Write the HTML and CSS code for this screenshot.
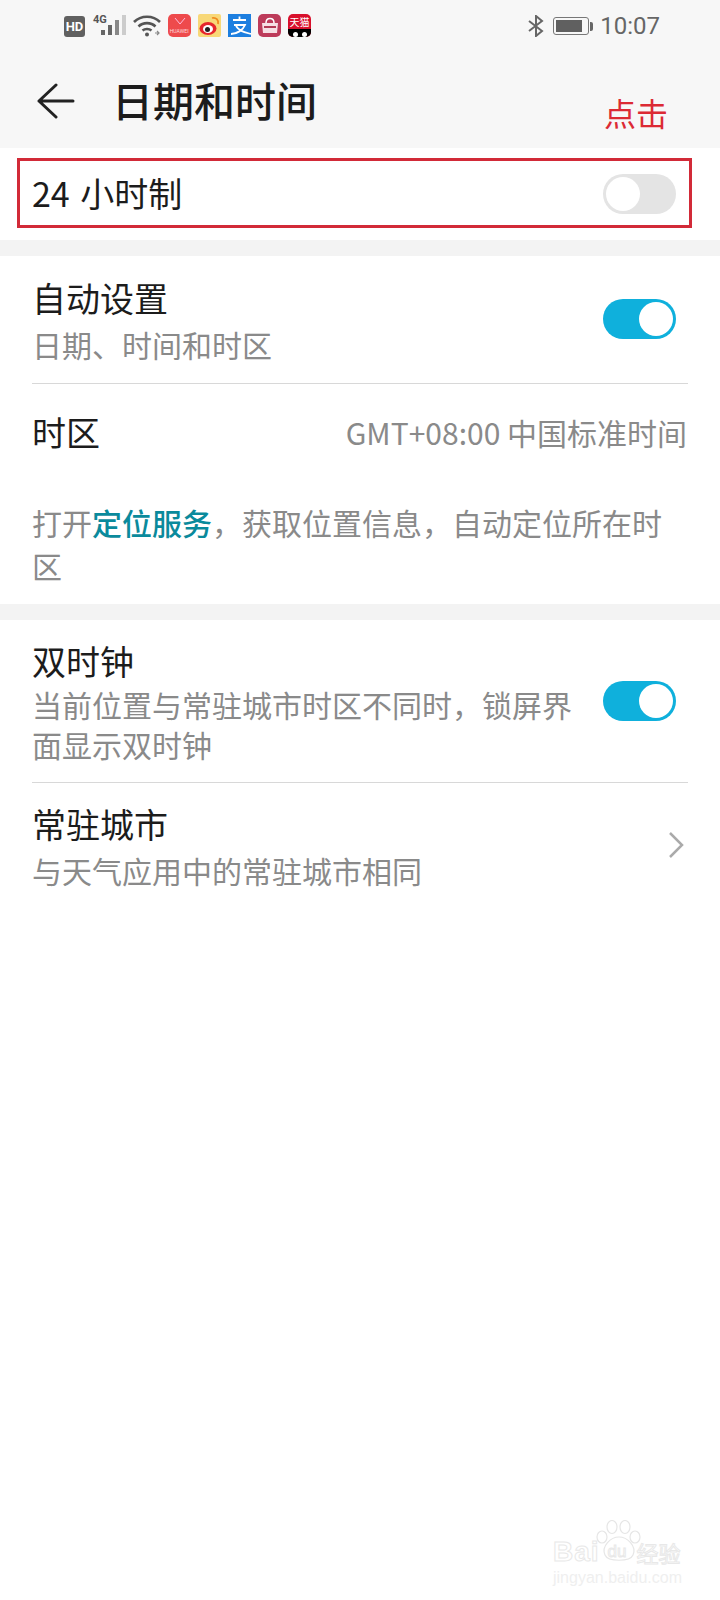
FILE: index.html
```html
<!DOCTYPE html>
<html lang="zh-CN">
<head>
    <meta charset="UTF-8">
    <meta name="viewport" content="width=device-width, initial-scale=1.0">
    <title>日期和时间</title>
    <link rel="stylesheet" href="styles.css">
</head>
<body>
    <div class="top-area">
        <div class="status-bar">
            <div class="status-left">
                <span class="hd-badge">HD</span>
                <div class="signal">
                    <span class="signal-label">4G</span>
                    <svg width="26" height="22" viewBox="0 0 26 22">
                        <rect x="0" y="16" width="4" height="5" fill="#666"/>
                        <rect x="7" y="11" width="4" height="10" fill="#666"/>
                        <rect x="14" y="6" width="4" height="15" fill="#888"/>
                        <rect x="21" y="1" width="4" height="20" fill="#ccc"/>
                    </svg>
                </div>
                <svg class="wifi" width="28" height="24" viewBox="0 0 28 24" fill="none" stroke="#555" stroke-width="2.6">
                    <path d="M1 8 C8 1 20 1 27 8"/>
                    <path d="M5.500 12.500 C10 8 18 8 22.500 12.500"/>
                    <path d="M9.500 16.500 C12 14.500 16 14.500 18.500 16.500"/>
                    <circle cx="14" cy="20.500" r="2" fill="#555" stroke="none"/>
                    <path d="M22 19 h4 M24 17 l2 2 l-2 2" stroke-width="1.200" stroke="#888"/>
                </svg>
                <div class="app-icon huawei">
                    <svg width="12" height="8" viewBox="0 0 12 8" fill="none" stroke="#fbd" stroke-width="1"><path d="M1 0 L6 6 L11 0"/></svg>
                    <span class="huawei-name">HUAWEI</span>
                </div>
                <div class="app-icon weibo">
                    <svg width="23" height="23" viewBox="0 0 23 23">
                        <ellipse cx="10" cy="14.500" rx="8.500" ry="6.500" fill="#e6262c"/>
                        <ellipse cx="10" cy="15" rx="5" ry="4" fill="#fff"/>
                        <circle cx="9.500" cy="15.500" r="2.500" fill="#222"/>
                        <path d="M14 4 C18 3 21 6 20 10" fill="none" stroke="#f08a1d" stroke-width="1.800"/>
                    </svg>
                </div>
                <div class="app-icon alipay">
                    <svg width="23" height="23" viewBox="0 0 23 23" fill="none" stroke="#fff" stroke-width="1.800">
                        <path d="M5 6 H18 M11.500 2.500 V6 M6 11 H17 C15 16 9 20 3 20 M8 12 C11 17 16 18 23 20"/>
                    </svg>
                </div>
                <div class="app-icon bag">
                    <svg width="22" height="22" viewBox="0 0 22 22">
                        <path d="M7 8 C7 2 15 2 15 8" fill="none" stroke="#fff" stroke-width="1.500"/>
                        <path d="M3 8 H19 L18 18 H4 Z" fill="#f6dfe4"/>
                        <rect x="5" y="11" width="12" height="2" fill="#b23a55"/>
                    </svg>
                </div>
                <div class="app-icon tmall">
                    <span class="tmall-name">天猫</span>
                    <div class="tmall-eyes"><i></i><i></i></div>
                </div>
            </div>
            <div class="status-right">
                <svg width="16" height="22" viewBox="0 0 16 22" fill="none" stroke="#666" stroke-width="2">
                    <path d="M1 6 L14 16 L8 21 V1 L14 6 L1 16"/>
                </svg>
                <div class="battery">
                    <div class="battery-body"><div class="battery-level"></div></div>
                    <div class="battery-cap"></div>
                </div>
                <span class="clock">10:07</span>
            </div>
        </div>
        <div class="app-bar">
            <svg class="back-arrow" width="38" height="36" viewBox="0 0 38 36" fill="none" stroke="#222" stroke-width="3" stroke-linecap="round" stroke-linejoin="round">
                <path d="M19 2 L2 18 L19 34 M2 18 H36"/>
            </svg>
            <h1 class="page-title">日期和时间</h1>
            <span class="click-note">点击</span>
        </div>
    </div>

    <div class="section section-first">
        <div class="row-boxed">
            <span class="row-title">24 小时制</span>
            <div class="toggle"><div class="knob"></div></div>
        </div>
    </div>
    <div class="band"></div>

    <div class="section">
        <div class="row row-auto">
            <div class="row-text">
                <div class="row-title">自动设置</div>
                <div class="row-sub">日期、时间和时区</div>
            </div>
            <div class="toggle on"><div class="knob"></div></div>
        </div>
        <div class="row row-zone">
            <div class="row-title">时区</div>
            <div class="row-value">GMT+08:00 中国标准时间</div>
        </div>
        <p class="note">打开<span class="note-link">定位服务</span>，获取位置信息，自动定位所在时区</p>
    </div>
    <div class="band"></div>

    <div class="section">
        <div class="row row-dual">
            <div class="row-text">
                <div class="row-title">双时钟</div>
                <div class="row-sub dual-sub">当前位置与常驻城市时区不同时，锁屏界面显示双时钟</div>
            </div>
            <div class="toggle on"><div class="knob"></div></div>
        </div>
        <div class="row row-city">
            <div class="row-text">
                <div class="row-title">常驻城市</div>
                <div class="row-sub">与天气应用中的常驻城市相同</div>
            </div>
            <svg class="chevron" width="16" height="28" viewBox="0 0 16 28" fill="none" stroke="#aaa" stroke-width="2.500">
                <path d="M2 2 L14 14 L2 26"/>
            </svg>
        </div>
    </div>

    <div class="watermark">
        <svg class="paw" width="50" height="44" viewBox="0 0 50 44" fill="#fff" stroke="#e6e6e6" stroke-width="1.200">
            <ellipse cx="7" cy="17" rx="5" ry="6"/>
            <ellipse cx="17" cy="7" rx="5" ry="6.500"/>
            <ellipse cx="30" cy="7" rx="5" ry="6.500"/>
            <ellipse cx="40" cy="17" rx="5" ry="6"/>
            <path d="M24 17 C32 17 42 26 38 35 C35 42 13 42 10 35 C6 26 16 17 24 17 Z"/>
        </svg>
        <div class="wm-line">
            <span class="wm-brand">Bai</span><span class="wm-du">du</span><span class="wm-cn">经验</span>
        </div>
        <div class="wm-url">jingyan.baidu.com</div>
    </div>
</body>
</html>
```

FILE: styles.css
```css
* {
    box-sizing: border-box;
}
body {
    margin: 0;
    width: 720px;
    height: 1600px;
    overflow: hidden;
    position: relative;
    background: #fff;
    color: #1c1c1c;
    font-family: "Noto Sans CJK SC", "Roboto", sans-serif;
}
.top-area {
    background: #f7f7f7;
    height: 148px;
}
.status-bar {
    height: 52px;
    padding: 14px 60px 0 64px;
    display: flex;
    justify-content: space-between;
    align-items: flex-start;
}
.status-left {
    display: flex;
    align-items: flex-start;
}
.status-right {
    display: flex;
    align-items: center;
    height: 24px;
}
.hd-badge {
    width: 21px;
    height: 21px;
    margin-top: 2px;
    border-radius: 3px;
    background: #606060;
    color: #fff;
    font-family: "Roboto", sans-serif;
    font-size: 13px;
    font-weight: 700;
    line-height: 21px;
    text-align: center;
}
.signal {
    position: relative;
    width: 38px;
    height: 23px;
    margin-left: 8px;
    display: flex;
    justify-content: flex-end;
    padding-right: 4px;
}
.signal-label {
    position: absolute;
    left: 0;
    top: 0;
    color: #555;
    font-family: "Roboto", sans-serif;
    font-size: 11px;
    font-weight: 700;
    line-height: 12px;
}
.wifi {
    margin-left: 2px;
}
.app-icon {
    width: 23px;
    height: 23px;
    margin-left: 7px;
    border-radius: 5px;
    overflow: hidden;
    display: flex;
    flex-direction: column;
    align-items: center;
}
.huawei {
    background: #ee4a4c;
    justify-content: center;
    gap: 1px;
}
.huawei-name {
    color: #fdd;
    font-family: "Roboto", sans-serif;
    font-size: 6px;
    line-height: 7px;
    transform: scale(0.85);
}
.weibo {
    background: #f8d878;
    border-radius: 2px;
}
.alipay {
    background: #1d7fe0;
    border-radius: 0;
}
.bag {
    background: #bd3b5a;
    justify-content: center;
}
.tmall {
    background: #d8102c;
}
.tmall-name {
    color: #fff;
    font-size: 10px;
    line-height: 15px;
}
.tmall-eyes {
    width: 100%;
    height: 8px;
    background: #000;
    display: flex;
    justify-content: center;
    gap: 4px;
    padding-top: 3px;
}
.tmall-eyes i {
    width: 5px;
    height: 5px;
    border-radius: 50%;
    background: #fff;
}
.battery {
    display: flex;
    align-items: center;
    margin-left: 9px;
}
.battery-body {
    width: 36px;
    height: 18px;
    border: 1.500px solid #777;
    border-radius: 3px;
    padding: 2px;
}
.battery-level {
    width: 26px;
    height: 100%;
    background: #606060;
}
.battery-cap {
    width: 3px;
    height: 9px;
    margin-left: 1px;
    background: #666;
    border-radius: 0 2px 2px 0;
}
.clock {
    margin-left: 7px;
    color: #666;
    font-family: "Roboto", sans-serif;
    font-size: 24px;
    line-height: 24px;
}
.app-bar {
    height: 96px;
    padding-left: 37px;
    display: flex;
    align-items: flex-start;
    position: relative;
}
.back-arrow {
    margin-top: 31px;
}
.page-title {
    margin: 17px 0 0 37px;
    font-size: 41px;
    font-weight: 500;
    line-height: 60px;
}
.click-note {
    position: absolute;
    left: 604px;
    top: 38px;
    color: #dc2a34;
    font-size: 32px;
    line-height: 44px;
}
.section {
    background: #fff;
}
.section-first {
    height: 92px;
    padding: 10px 28px 0 17px;
}
.row-boxed {
    height: 70px;
    padding: 0 13px 0 12px;
    border: 3px solid #d22a38;
    display: flex;
    justify-content: space-between;
    align-items: center;
}
.row-boxed .row-title {
    word-spacing: 3px;
}
.row-boxed .toggle {
    margin-top: 2px;
}
.band {
    height: 16px;
    background: #f3f3f3;
}
.row {
    margin: 0 32px;
    display: flex;
    justify-content: space-between;
    align-items: center;
}
.row-title {
    font-size: 34px;
    line-height: 48px;
}
.row-sub {
    color: #8a8a8a;
    font-size: 30px;
    line-height: 44px;
}
.row-auto {
    height: 128px;
    padding: 18px 12px 0 0;
    align-items: flex-start;
    border-bottom: 1px solid #d8d8d8;
}
.row-auto .toggle {
    margin-top: 25px;
}
.row-zone {
    height: 99px;
    padding: 0 1px 4px 0;
}
.row-value {
    color: #8a8a8a;
    font-size: 30px;
    line-height: 44px;
}
.note {
    margin: 0;
    padding: 18px 32px 17px;
    color: #8a8a8a;
    font-size: 30px;
    line-height: 43px;
}
.note-link {
    color: #0a8a9c;
    font-weight: 500;
}
.row-dual {
    height: 163px;
    padding: 0 12px 0 0;
    border-bottom: 1px solid #d8d8d8;
}
.row-dual .row-title {
    line-height: 46px;
}
.dual-sub {
    width: 540px;
    line-height: 40px;
}
.row-city {
    height: 115px;
    padding: 17px 4px 0 0;
    align-items: flex-start;
}
.chevron {
    margin-top: 31px;
}
.toggle {
    width: 73px;
    height: 40px;
    padding: 3px;
    border-radius: 20px;
    background: #e4e4e4;
    display: flex;
}
.knob {
    width: 34px;
    height: 34px;
    border-radius: 50%;
    background: #fff;
}
.toggle.on {
    background: #0fb0dc;
    justify-content: flex-end;
}
.watermark {
    position: absolute;
    left: 553px;
    top: 1520px;
    width: 130px;
}
.paw {
    position: absolute;
    left: 42px;
    top: 0;
}
.wm-line {
    position: relative;
    margin-top: 18px;
    height: 28px;
    display: flex;
    align-items: center;
    font-family: "Liberation Sans", sans-serif;
    color: #fff;
    -webkit-text-stroke: 1px #e8e8e8;
}
.wm-brand {
    font-size: 28px;
    font-weight: 700;
    letter-spacing: 1px;
}
.wm-du {
    margin-left: 8px;
    font-size: 17px;
}
.wm-cn {
    margin-left: 10px;
    font-family: "Noto Sans CJK SC", sans-serif;
    font-size: 22px;
}
.wm-url {
    margin-top: 3px;
    color: #efefef;
    font-family: "Liberation Sans", sans-serif;
    font-size: 16px;
    line-height: 18px;
}
```
